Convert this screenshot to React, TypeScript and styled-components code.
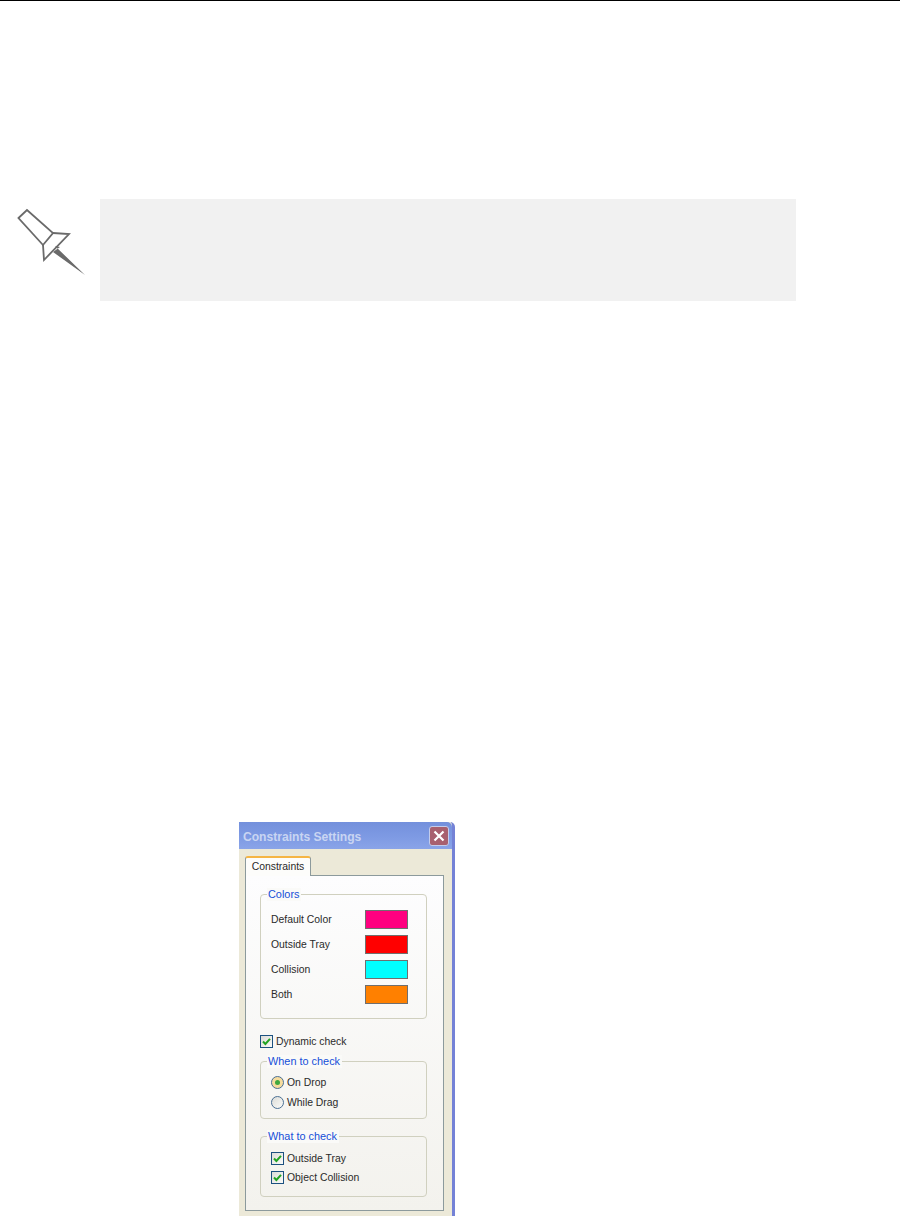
import styled, { createGlobalStyle } from "styled-components";

const GlobalStyle = createGlobalStyle`
  html, body {
    margin: 0;
    padding: 0;
    background: #ffffff;
  }
  body {
    font-family: "Liberation Sans", Arial, sans-serif;
  }
`;

const Page = styled.div`
  width: 900px;
  height: 1216px;
  overflow: hidden;
  background: #ffffff;
`;

const TopRule = styled.div`
  height: 1px;
  background: #000000;
`;

const NoteRow = styled.div`
  display: flex;
  align-items: flex-start;
  margin-top: 198px;
  padding-left: 17px;
`;

const PinIcon = styled.svg`
  display: block;
  width: 69px;
  height: 69px;
  margin-top: 9px;
  margin-right: 14px;
  flex: none;
`;

const NoteBox = styled.div`
  width: 696px;
  height: 102px;
  background: #f1f1f1;
`;

const Dialog = styled.div`
  width: 216px;
  height: 394px;
  margin-top: 521px;
  margin-left: 239px;
  box-sizing: border-box;
  background: #ece9d8;
  border-right: 3px solid #7482d6;
  border-top-right-radius: 5px;
  font-family: "Liberation Sans", Arial, sans-serif;
  font-size: 10.4px;
  color: #2a2a2a;
`;

const TitleBar = styled.div`
  height: 27px;
  display: flex;
  align-items: center;
  justify-content: space-between;
  box-sizing: border-box;
  padding: 0 3px 0 4px;
  background: linear-gradient(#7390dc, #7f9be4 60%, #8aa4e8);
  border-top-right-radius: 5px;
`;

const TitleText = styled.span`
  padding-top: 3px;
  font-size: 12.1px;
  font-weight: 700;
  color: #c9d5f2;
`;

const CloseButton = styled.div`
  width: 20px;
  height: 20px;
  display: flex;
  align-items: center;
  justify-content: center;
  box-sizing: border-box;
  border: 1px solid #c3cdec;
  border-radius: 3px;
  background: #a8606f;
`;

const Tabs = styled.div`
  padding: 7px 8px 0 6px;
`;

const Tab = styled.div`
  width: 66px;
  height: 20px;
  box-sizing: border-box;
  margin-bottom: -1px;
  position: relative;
  padding-top: 1px;
  text-align: center;
  line-height: 16px;
  background: #fdfdfb;
  border: 1px solid #8c9a9c;
  border-bottom: none;
  border-top: 2px solid #f5b544;
  border-radius: 3px 3px 0 0;
`;

const TabPanel = styled.div`
  height: 336px;
  box-sizing: border-box;
  padding: 18px 16px 0 14px;
  background: linear-gradient(#fdfdfe, #f3f2ed);
  border: 1px solid #8c9a9c;
`;

const Group = styled.div<{ $height: number; $top?: number }>`
  position: relative;
  height: ${(p) => p.$height}px;
  margin-top: ${(p) => p.$top ?? 0}px;
  box-sizing: border-box;
  border: 1px solid #d0d0bf;
  border-radius: 4px;
`;

const Legend = styled.span`
  position: absolute;
  top: -7px;
  left: 6px;
  padding: 0 2px 0 1px;
  font-size: 10.9px;
  line-height: 13px;
  color: #1650d8;
  background: #fafaf8;
`;

const ColorList = styled.div`
  display: flex;
  flex-direction: column;
  gap: 6px;
  padding: 15px 18px 0 10px;
`;

const ColorRow = styled.div`
  display: flex;
  align-items: center;
  justify-content: space-between;
`;

const Swatch = styled.div<{ $color: string }>`
  width: 43px;
  height: 19px;
  box-sizing: border-box;
  border: 1px solid #6f6f6f;
  background: ${(p) => p.$color};
`;

const OptionList = styled.div<{ $gap: number; $top: number }>`
  display: flex;
  flex-direction: column;
  gap: ${(p) => p.$gap}px;
  padding: ${(p) => p.$top}px 0 0 10px;
`;

const Option = styled.div<{ $top?: number }>`
  display: flex;
  align-items: center;
  gap: 3px;
  height: 13px;
  margin-top: ${(p) => p.$top ?? 0}px;
  white-space: nowrap;
`;

const CheckBox = styled.div`
  width: 13px;
  height: 13px;
  flex: none;
  box-sizing: border-box;
  display: flex;
  align-items: center;
  justify-content: center;
  border: 1px solid #1c5180;
  background: linear-gradient(135deg, #dcdcd7, #fbfbf9);
`;

const Radio = styled.div<{ $on?: boolean }>`
  width: 13px;
  height: 13px;
  flex: none;
  box-sizing: border-box;
  display: flex;
  align-items: center;
  justify-content: center;
  border-radius: 50%;
  border: 1px solid #4a6f94;
  background: ${(p) => (p.$on ? "#f6dc9e" : "linear-gradient(135deg, #dcdcd7, #fbfbf9)")};
`;

const RadioDot = styled.div`
  width: 5px;
  height: 5px;
  border-radius: 50%;
  background: #3fa83f;
`;

const Check = () => (
  <svg width="9" height="9" viewBox="0 0 9 9">
    <path d="M1 4.5 L3.4 7 L8 1.8" fill="none" stroke="#22a322" strokeWidth="2" />
  </svg>
);

const colors = [
  { label: "Default Color", color: "#ff0080" },
  { label: "Outside Tray", color: "#ff0000" },
  { label: "Collision", color: "#00ffff" },
  { label: "Both", color: "#ff8000" },
];

export default function App() {
  return (
    <Page>
      <GlobalStyle />
      <TopRule />
      <NoteRow>
        <PinIcon viewBox="0 0 69 69">
          <g fill="none" stroke="#6a6a6a" strokeWidth="1.8" strokeLinejoin="miter">
            <path d="M1.5 10 L10 2 L36 25 L26 37 Z" />
            <path d="M36 25 L52 26 L27 52 L26 37" />
          </g>
          <path d="M38 38 L68 67 L36 44 L43 39 Z" fill="#6a6a6a" />
        </PinIcon>
        <NoteBox />
      </NoteRow>
      <Dialog>
        <TitleBar>
          <TitleText>Constraints Settings</TitleText>
          <CloseButton>
            <svg width="12" height="12" viewBox="0 0 12 12">
              <path d="M1.5 1.5 L10.5 10.5 M10.5 1.5 L1.5 10.5" stroke="#ffffff" strokeWidth="2.2" />
            </svg>
          </CloseButton>
        </TitleBar>
        <Tabs>
          <Tab>Constraints</Tab>
          <TabPanel>
            <Group $height={125}>
              <Legend>Colors</Legend>
              <ColorList>
                {colors.map((c) => (
                  <ColorRow key={c.label}>
                    <span>{c.label}</span>
                    <Swatch $color={c.color} />
                  </ColorRow>
                ))}
              </ColorList>
            </Group>
            <Option $top={16}>
              <CheckBox><Check /></CheckBox>
              Dynamic check
            </Option>
            <Group $height={58} $top={13}>
              <Legend>When to check</Legend>
              <OptionList $gap={7} $top={14}>
                <Option>
                  <Radio $on><RadioDot /></Radio>
                  On Drop
                </Option>
                <Option>
                  <Radio />
                  While Drag
                </Option>
              </OptionList>
            </Group>
            <Group $height={61} $top={17}>
              <Legend>What to check</Legend>
              <OptionList $gap={6} $top={15}>
                <Option>
                  <CheckBox><Check /></CheckBox>
                  Outside Tray
                </Option>
                <Option>
                  <CheckBox><Check /></CheckBox>
                  Object Collision
                </Option>
              </OptionList>
            </Group>
          </TabPanel>
        </Tabs>
      </Dialog>
    </Page>
  );
}
